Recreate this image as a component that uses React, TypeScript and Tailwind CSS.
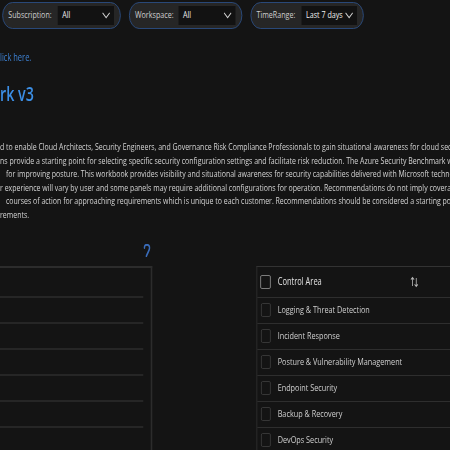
import React from "react";

const Chevron = () => (
  <svg width="11" height="7" viewBox="0 0 11 7" fill="none">
    <path d="M0.8 0.8 L5.5 5.6 L10.2 0.8" stroke="#d4d4d4" strokeWidth="1.2" />
  </svg>
);

const Pill = ({ label, value, labelW, boxW }: { label: string; value: string; labelW: number; boxW: number }) => (
  <div className="flex h-[27px] items-center rounded-full border-[1.5px] border-[#2b4f86] bg-[#262626] pl-[7px] pr-[8px]">
    <span className="whitespace-nowrap text-[9.5px] text-[#cfcfcf]" style={{ width: labelW }}>{label}</span>
    <div
      className="flex h-[19px] items-center justify-between bg-[#121212] pl-[6px] pr-[5px] text-[9.5px] text-[#f0f0f0]"
      style={{ width: boxW }}
    >
      <span className="whitespace-nowrap">{value}</span>
      <Chevron />
    </div>
  </div>
);

const SortIcon = () => (
  <svg width="11" height="12" viewBox="0 0 11 12" fill="none" stroke="#b5b5b5" strokeWidth="1.1">
    <path d="M3 10 V1.5 M0.8 3.7 L3 1.5 L5.2 3.7" />
    <path d="M8 2 V10.5 M5.8 8.3 L8 10.5 L10.2 8.3" />
  </svg>
);

const Box = ({ strong }: { strong?: boolean }) => (
  <div
    className={
      strong
        ? "h-[14px] w-[14px] shrink-0 rounded-[2px] border-[1.5px] border-[#8c8c8c]"
        : "h-[14px] w-[13px] shrink-0 rounded-[2px] border border-[#3c3c3c]"
    }
  />
);

const rows = [
  "Logging & Threat Detection",
  "Incident Response",
  "Posture & Vulnerability Management",
  "Endpoint Security",
  "Backup & Recovery",
  "DevOps Security",
];

const lines: { t: string; indent: boolean }[] = [
  { t: "d to enable Cloud Architects, Security Engineers, and Governance Risk Compliance Professionals to gain situational awareness for cloud security posture", indent: false },
  { t: "ns provide a starting point for selecting specific security configuration settings and facilitate risk reduction. The Azure Security Benchmark workbook", indent: false },
  { t: "for improving posture. This workbook provides visibility and situational awareness for security capabilities delivered with Microsoft technologies", indent: true },
  { t: "r experience will vary by user and some panels may require additional configurations for operation. Recommendations do not imply coverage", indent: false },
  { t: "courses of action for approaching requirements which is unique to each customer. Recommendations should be considered a starting point", indent: true },
  { t: "rements.", indent: false },
];

export default function App() {
  return (
    <div className="h-[450px] w-[450px] overflow-hidden bg-[#141414]" style={{ fontFamily: '"Open Sans", "Noto Sans", sans-serif' }}>
      <div className="w-[600px] origin-top-left scale-x-75">
        <div className="flex items-center gap-[11px] pl-[3px] pt-[2px]">
          <Pill label="Subscription:" value="All" labelW={66} boxW={75} />
          <Pill label="Workspace:" value="All" labelW={58} boxW={76} />
          <Pill label="TimeRange:" value="Last 7 days" labelW={60} boxW={74} />
        </div>

        <div className="mt-[21px] text-[10px] leading-[14px] text-[#3e82d4]">lick here.</div>
        <div className="mt-[16px] text-[19px] font-semibold leading-[28px] text-[#3c8fe6]">rk v3</div>

        <div className="mt-[32px] text-[9.3px] leading-[13.6px] text-[#d4d4d4]">
          {lines.map((l, i) => (
            <div key={i} className={l.indent ? "whitespace-nowrap pl-[8px]" : "whitespace-nowrap"}>{l.t}</div>
          ))}
        </div>

        <div className="flex items-start">
          <div className="flex w-[205px] flex-col">
            <div className="flex h-[44px] items-end justify-end pb-[9px] pr-[2px]">
              <svg width="10" height="13" viewBox="0 0 10 13" fill="none">
                <path d="M1.6 4 C1.2 1.8 3 0.8 5 0.8 C7.3 0.8 8.6 2.2 8.4 4.2 C8.2 6.6 6 8.3 4.2 12.2" stroke="#3a6cba" strokeWidth="2" strokeLinecap="round" />
              </svg>
            </div>
            <div className="h-[200px] border-r-2 border-t-2 border-[#2c2c2c]">
              <div className="mr-[10px] h-[30px] border-b-2 border-[#262626]" />
              {[0, 1, 2, 3, 4].map((i) => (
                <div key={i} className="mr-[10px] h-[26px] border-b-2 border-[#262626]" />
              ))}
            </div>
          </div>

          <div className="ml-[139px] mt-[44px] w-[260px] border-l border-t border-[#333333]">
            <div className="flex h-[31px] items-center border-b border-[#2e2e2e] pl-[4px]">
              <Box strong />
              <span className="ml-[9px] text-[10px] text-[#e2e2e2]">Control Area</span>
              <span className="ml-[118px] flex items-center">
                <SortIcon />
              </span>
            </div>
            {rows.map((r) => (
              <div key={r} className="flex h-[26px] items-center border-b border-[#2e2e2e] pl-[5px]">
                <Box />
                <span className="ml-[9px] text-[9.7px] text-[#cfcfcf]">{r}</span>
              </div>
            ))}
          </div>
        </div>
      </div>
    </div>
  );
}
